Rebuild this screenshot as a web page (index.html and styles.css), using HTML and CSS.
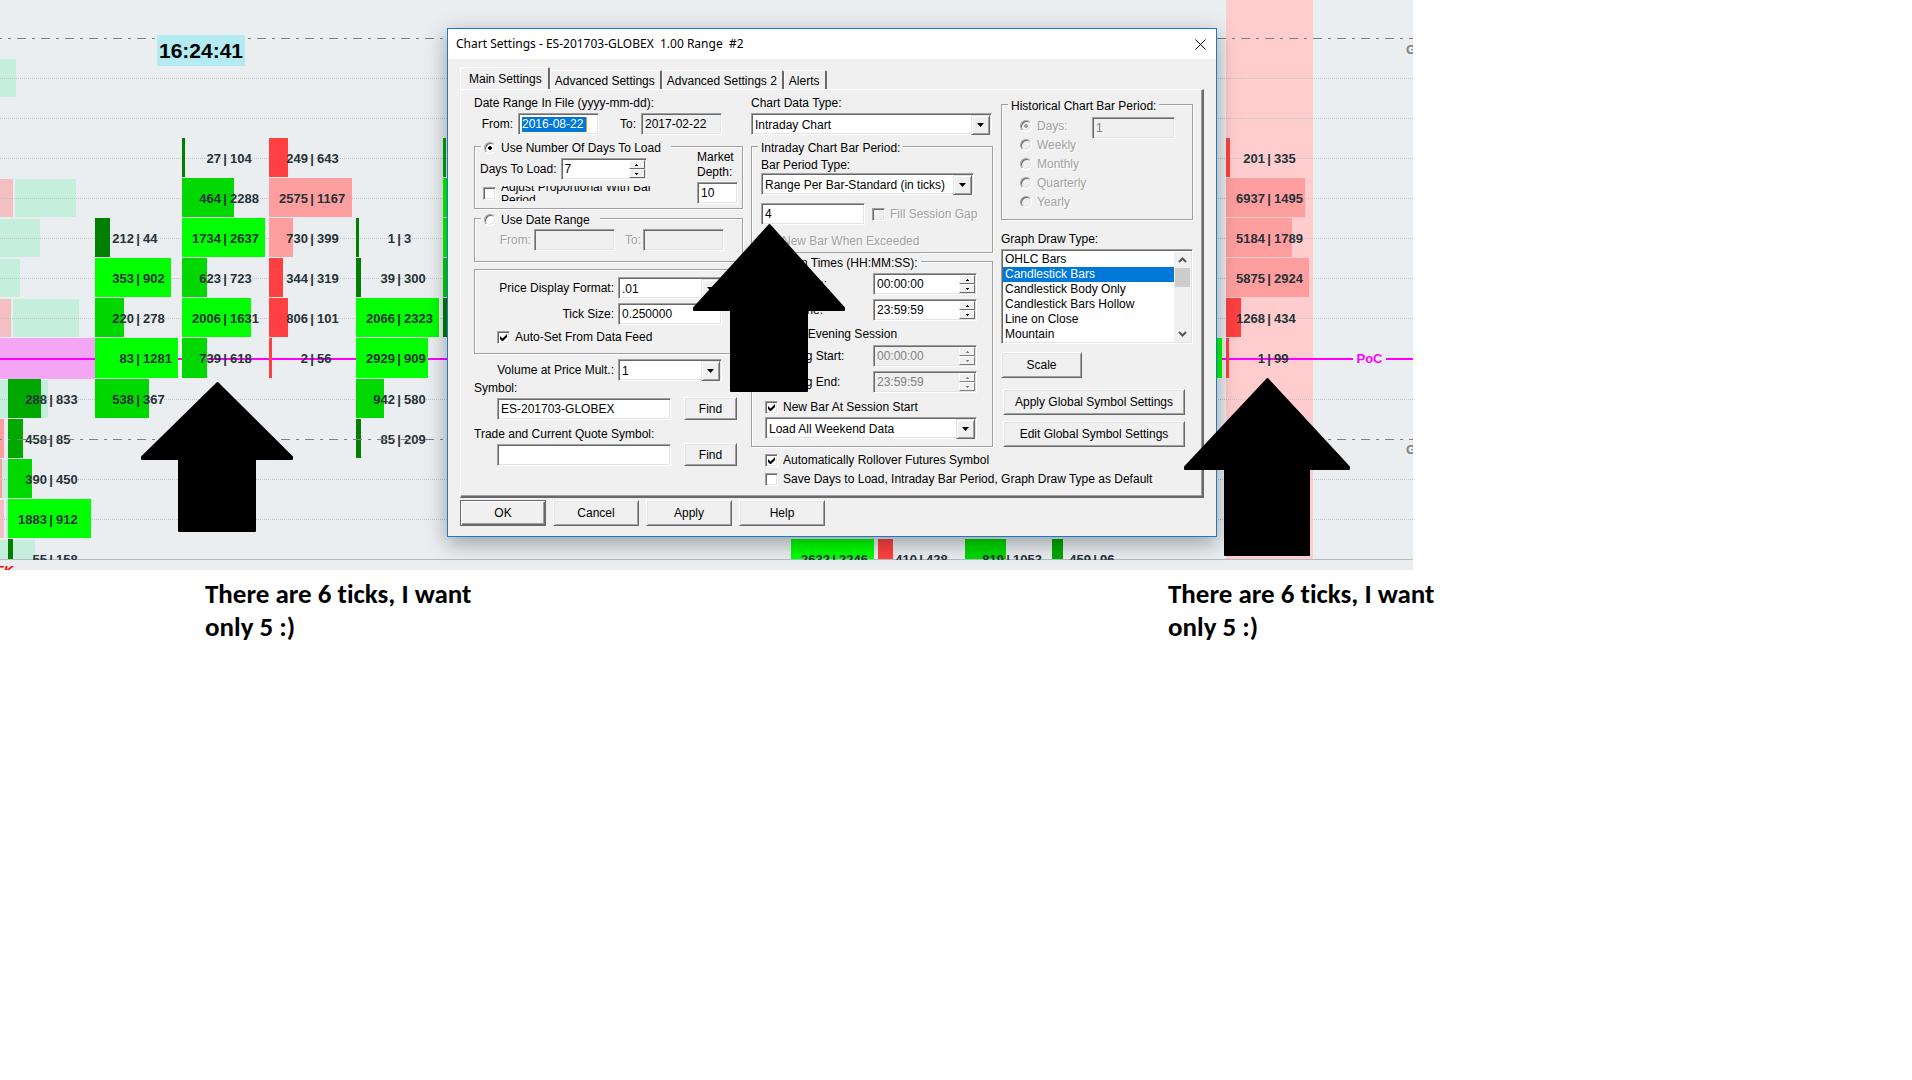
FILE: index.html
```html
<!DOCTYPE html>
<html lang="en">
<head>
  <meta charset="UTF-8">
  <meta name="viewport" content="width=device-width, initial-scale=1.0">
  <title>Chart Settings</title>
  <link rel="stylesheet" href="styles.css">
</head>
<body>
  <main class="chart">
    <!-- grid lines, highlighted column and volume profile -->
    <svg class="backdrop" width="100%" height="570">
      <g class="profile-green">
        <rect x="0" y="59" width="16" height="38" />
        <rect x="15" y="179" width="61" height="38" />
        <rect x="0" y="219" width="40" height="38" />
        <rect x="0" y="259" width="20" height="38" />
        <rect x="13" y="299" width="66" height="38" />
        <rect x="0" y="380" width="48" height="38" />
        <rect x="2" y="460" width="6" height="38" />
        <rect x="6" y="500" width="2" height="38" />
        <rect x="0" y="540" width="35" height="19" />
      </g>
      <g class="profile-pink">
        <rect x="0" y="179" width="13" height="38" />
        <rect x="0" y="299" width="11" height="38" />
        <rect x="0" y="500" width="4" height="38" />
      </g>
      <rect class="profile-red" x="0" y="419" width="4" height="39" />
      <rect class="profile-red" x="0" y="459" width="2" height="39" />
      <rect class="profile-poc" x="0" y="338" width="95" height="41" />
      <rect class="highlight" x="1226" y="0" width="87" height="559" />
      <g class="dotted">
        <line x1="0" y1="78.5" x2="100%" y2="78.5" />
        <line x1="0" y1="118.5" x2="100%" y2="118.5" />
        <line x1="0" y1="158.5" x2="100%" y2="158.5" />
        <line x1="0" y1="198.5" x2="100%" y2="198.5" />
        <line x1="0" y1="238.5" x2="100%" y2="238.5" />
        <line x1="0" y1="278.5" x2="100%" y2="278.5" />
        <line x1="0" y1="318.5" x2="100%" y2="318.5" />
        <line x1="0" y1="399.5" x2="100%" y2="399.5" />
        <line x1="0" y1="479.5" x2="100%" y2="479.5" />
        <line x1="0" y1="519.5" x2="100%" y2="519.5" />
      </g>
      <line class="poc-line" x1="0" y1="359" x2="100%" y2="359" />
      <line class="axis" x1="0" y1="559.5" x2="100%" y2="559.5" />
    </svg>

    <div class="columns" id="columns"></div>

    <svg class="overlay" width="100%" height="570">
      <line x1="0" y1="38.5" x2="100%" y2="38.5" />
      <line x1="0" y1="439.5" x2="100%" y2="439.5" />
    </svg>

    <time class="clock">16:24:41</time>
    <span class="poc-label">PoC</span>
    <span class="level-label high">G</span>
    <span class="level-label low">G</span>
    <span class="week-label">EK</span>
  </main>

  <div class="notes">
    <p>There are 6 ticks, I want only 5 :)</p>
    <p>There are 6 ticks, I want only 5 :)</p>
  </div>

  <form class="dialog" onsubmit="return false">
    <header class="titlebar">
      <h1>Chart Settings - ES-201703-GLOBEX&nbsp; 1.00 Range&nbsp; #2</h1>
      <button type="button" class="close" aria-label="Close">
        <svg width="11" height="11" viewBox="0 0 11 11"><path d="M.5.5l10 10M10.5.5l-10 10" stroke="#000" fill="none" /></svg>
      </button>
    </header>

    <div class="dialog-body">
      <nav class="tabs">
        <button type="button" class="tab active">Main Settings</button>
        <button type="button" class="tab">Advanced Settings</button>
        <button type="button" class="tab">Advanced Settings 2</button>
        <button type="button" class="tab">Alerts</button>
      </nav>

      <div class="panel">
        <section class="col col-left">
          <div class="label">Date Range In File (yyyy-mm-dd):</div>
          <div class="row dates">
            <label for="from">From:</label>
            <span class="field date selected"><input id="from" type="text" value="2016-08-22"></span>
            <label for="to">To:</label>
            <input class="field date readonly" id="to" type="text" value="2017-02-22" readonly>
          </div>

          <fieldset class="group days">
            <legend class="wide"><label><input type="radio" name="mode" checked>Use Number Of Days To Load</label></legend>
            <div class="days-main">
              <div class="row">
                <label for="days">Days To Load:</label>
                <span class="field spin spin-days">
                  <input id="days" type="text" value="7">
                  <span class="steps"><button type="button" aria-label="Up"></button><button type="button" aria-label="Down"></button></span>
                </span>
              </div>
              <label class="adjust"><input type="checkbox"><span>Adjust Proportional With Bar Period</span></label>
            </div>
            <div class="depth">
              <label for="depth">Market Depth:</label>
              <input class="field" id="depth" type="text" value="10">
            </div>
          </fieldset>

          <fieldset class="group range">
            <legend class="wide"><label><input type="radio" name="mode">Use Date Range</label></legend>
            <div class="row dates">
              <label class="off" for="from2">From:</label>
              <input class="field date" id="from2" type="text" disabled>
              <label class="off" for="to2">To:</label>
              <input class="field date" id="to2" type="text" disabled>
            </div>
          </fieldset>

          <fieldset class="group price">
            <div class="row right">
              <label for="format">Price Display Format:</label>
              <span class="field combo"><select id="format"><option>.01</option></select></span>
            </div>
            <div class="row right">
              <label for="tick">Tick Size:</label>
              <input class="field" id="tick" type="text" value="0.250000">
            </div>
            <label class="check"><input type="checkbox" checked>Auto-Set From Data Feed</label>
          </fieldset>

          <div class="row right volume">
            <label for="mult">Volume at Price Mult.:</label>
            <span class="field combo"><select id="mult"><option>1</option></select></span>
          </div>
          <label class="label" for="symbol">Symbol:</label>
          <div class="row symbol">
            <input class="field" id="symbol" type="text" value="ES-201703-GLOBEX">
            <button type="button" class="btn">Find</button>
          </div>
          <label class="label trade" for="quote">Trade and Current Quote Symbol:</label>
          <div class="row symbol">
            <input class="field" id="quote" type="text">
            <button type="button" class="btn">Find</button>
          </div>
        </section>

        <section class="col col-mid">
          <label class="label" for="datatype">Chart Data Type:</label>
          <span class="field combo datatype"><select id="datatype"><option>Intraday Chart</option></select></span>

          <fieldset class="group period">
            <legend>Intraday Chart Bar Period:</legend>
            <label class="label" for="bartype">Bar Period Type:</label>
            <span class="field combo"><select id="bartype"><option>Range Per Bar-Standard (in ticks)</option></select></span>
            <div class="row">
              <input class="field" type="text" value="4" aria-label="Bar period">
              <label class="check off"><input type="checkbox" disabled>Fill Session Gap</label>
            </div>
            <label class="check off exceeded"><input type="checkbox" disabled>New Bar When Exceeded</label>
          </fieldset>

          <fieldset class="group session">
            <legend>Session Times (HH:MM:SS):</legend>
            <div class="row">
              <label for="start">Start Time:</label>
              <span class="field spin">
                <input id="start" type="text" value="00:00:00">
                <span class="steps"><button type="button" aria-label="Up"></button><button type="button" aria-label="Down"></button></span>
              </span>
            </div>
            <div class="row">
              <label for="end">End Time:</label>
              <span class="field spin">
                <input id="end" type="text" value="23:59:59">
                <span class="steps"><button type="button" aria-label="Up"></button><button type="button" aria-label="Down"></button></span>
              </span>
            </div>
            <label class="check evening"><input type="checkbox">Use Evening Session</label>
            <div class="row">
              <label for="estart">Evening Start:</label>
              <span class="field spin disabled">
                <input id="estart" type="text" value="00:00:00" disabled>
                <span class="steps"><button type="button" aria-label="Up" disabled></button><button type="button" aria-label="Down" disabled></button></span>
              </span>
            </div>
            <div class="row">
              <label for="eend">Evening End:</label>
              <span class="field spin disabled">
                <input id="eend" type="text" value="23:59:59" disabled>
                <span class="steps"><button type="button" aria-label="Up" disabled></button><button type="button" aria-label="Down" disabled></button></span>
              </span>
            </div>
            <label class="check newbar"><input type="checkbox" checked>New Bar At Session Start</label>
            <span class="field combo"><select aria-label="Weekend data"><option>Load All Weekend Data</option></select></span>
          </fieldset>

          <div class="defaults">
            <label class="check"><input type="checkbox" checked>Automatically Rollover Futures Symbol</label>
            <label class="check"><input type="checkbox">Save Days to Load, Intraday Bar Period, Graph Draw Type as Default</label>
          </div>
        </section>

        <section class="col col-right">
          <fieldset class="group historical">
            <legend>Historical Chart Bar Period:</legend>
            <div class="radios off">
              <label><input type="radio" name="hist" checked disabled>Days:</label>
              <label><input type="radio" name="hist" disabled>Weekly</label>
              <label><input type="radio" name="hist" disabled>Monthly</label>
              <label><input type="radio" name="hist" disabled>Quarterly</label>
              <label><input type="radio" name="hist" disabled>Yearly</label>
            </div>
            <input class="field" type="text" value="1" aria-label="Days" disabled>
          </fieldset>

          <label class="label draw" for="drawtype">Graph Draw Type:</label>
          <div class="field listbox">
            <select id="drawtype" size="6">
              <option>OHLC Bars</option>
              <option selected>Candlestick Bars</option>
              <option>Candlestick Body Only</option>
              <option>Candlestick Bars Hollow</option>
              <option>Line on Close</option>
              <option>Mountain</option>
            </select>
            <div class="scrollbar">
              <svg width="9" height="6" viewBox="0 0 9 6"><path d="M1 5l3.500-3.500L8 5" /></svg>
              <span class="thumb"></span>
              <svg width="9" height="6" viewBox="0 0 9 6"><path d="M1 1l3.500 3.500L8 1" /></svg>
            </div>
          </div>
          <button type="button" class="btn scale">Scale</button>
          <button type="button" class="btn global">Apply Global Symbol Settings</button>
          <button type="button" class="btn global">Edit Global Symbol Settings</button>
        </section>
      </div>

      <footer class="actions">
        <button type="submit" class="btn default">OK</button>
        <button type="button" class="btn">Cancel</button>
        <button type="button" class="btn">Apply</button>
        <button type="button" class="btn">Help</button>
      </footer>
    </div>
  </form>

  <!-- hand drawn arrows on top of everything -->
  <svg class="arrows" width="1413" height="570">
    <path d="M217.500 383L292 457v2h-37v72h-76v-72h-37v-2z" />
    <path d="M769.500 225L844 308v2h-37v81h-76v-81h-37v-2z" />
    <path d="M1267.500 379L1349 467v2h-40v86h-84v-86h-40v-2z" />
  </svg>

  <script src="chart.js"></script>
</body>
</html>
```
FILE: chart.js
```js
// one entry per price bar: [row, bid, ask, bar width, colour]
const bars = [
  [[7, 288, 833, 33, 'mid'], [8, 458, 85, 15, 'mid'], [9, 390, 450, 24, 'green'], [10, 1883, 912, 83, 'lime'], [11, 55, 158, 5, 'dark']],
  [[3, 212, 44, 15, 'dark'], [4, 353, 902, 76, 'lime'], [5, 220, 278, 29, 'green'], [6, 83, 1281, 83, 'lime'], [7, 538, 367, 54, 'green']],
  [[1, 27, 104, 3, 'dark'], [2, 464, 2288, 52, 'green'], [3, 1734, 2637, 83, 'lime'], [4, 623, 723, 25, 'green'], [5, 2006, 1631, 69, 'lime'], [6, 739, 618, 25, 'green']],
  [[1, 249, 643, 19, 'red'], [2, 2575, 1167, 83, 'pink'], [3, 730, 399, 24, 'pink'], [4, 344, 319, 14, 'red'], [5, 806, 101, 19, 'red'], [6, 2, 56, 3, 'red']],
  [[3, 1, 3, 3, 'dark'], [4, 39, 300, 5, 'dark'], [5, 2066, 2323, 83, 'lime'], [6, 2929, 909, 72, 'lime'], [7, 942, 580, 28, 'green'], [8, 85, 209, 5, 'dark']],
  [[1, '', '', 3, 'mid'], [2, '', '', 40, 'lime'], [3, '', '', 83, 'lime'], [4, '', '', 40, 'green'], [5, '', '', 5, 'dark']],
  [],
  [],
  [],
  [[11, 2632, 2246, 83, 'lime']],
  [[11, 410, 428, 15, 'red']],
  [[11, 819, 1053, 41, 'green']],
  [[11, 459, 96, 11, 'mid']],
  [[6, '', '', 83, 'lime']],
  [[1, 201, 335, 4, 'red'], [2, 6937, 1495, 79, 'pink'], [3, 5184, 1789, 66, 'pink'], [4, 5875, 2924, 83, 'pink'], [5, 1268, 434, 15, 'red'], [6, 1, 99, 3, 'red']]
]

const columns = document.getElementById('columns')

for (const bar of bars) {
  const column = document.createElement('div')
  column.className = 'column'
  for (const [row, bid, ask, width, colour] of bar) {
    const cell = document.createElement('div')
    cell.className = 'cell'
    cell.style.gridRow = row
    cell.innerHTML = `<i class="bar ${colour}" style="width: ${width}px"></i>`
    if (bid !== '') {
      cell.innerHTML += `<span class="bid">${bid}</span><span class="sep">|</span><span class="ask">${ask}</span>`
    }
    column.appendChild(cell)
  }
  columns.appendChild(column)
}
```
FILE: styles.css
```css
* {
  box-sizing: border-box;
}

body {
  margin: 0;
  background: #fff;
  color: #000;
  font: 12px/14px "Liberation Sans", Arial, sans-serif;
}

/* chart */
.chart {
  position: relative;
  width: 73.9%;
  padding: 138px 0 10px 8px;
  overflow: hidden;
  background: #eaeef1;
}

.backdrop,
.overlay {
  position: absolute;
  top: 0;
  left: 0;
}

.profile-green { fill: #c5eedd; }
.profile-pink { fill: #f3bfc3; }
.profile-red { fill: #ff9e9e; }
.profile-poc { fill: #f3a6f3; }
.highlight { fill: #ffcdcd; }

.dotted line {
  stroke: #bcc5ca;
  stroke-dasharray: 1 1;
}

.poc-line {
  stroke: #f0f;
  stroke-width: 2;
}

.axis {
  stroke: #b0bcc2;
}

.overlay line {
  stroke: #808080;
  stroke-dasharray: 9 6 3 6;
  stroke-dashoffset: 7;
}

.columns {
  position: relative;
  display: grid;
  grid-template-columns: repeat(15, 87px);
}

.column {
  display: grid;
  grid-template-rows: repeat(5, 40px) 41px repeat(4, 40px) 21px;
}

.cell {
  position: relative;
  display: grid;
  grid-template-columns: 39px 8px 40px;
  overflow: hidden;
  color: #263238;
  font: bold 13px/42px "Liberation Sans", Arial, sans-serif;
}

.bar {
  position: absolute;
  top: 0;
  bottom: 1px;
  left: 0;
}

.bar.lime { background: #0f0; }
.bar.green { background: #00d800; }
.bar.mid { background: #00a800; }
.bar.dark { background: #008000; }
.bar.red { background: #ff4040; }
.bar.pink { background: #ff9e9e; }

.bid,
.sep,
.ask {
  position: relative;
}

.bid {
  text-align: right;
}

.sep {
  text-align: center;
}

.ask {
  padding-left: 1px;
}

.clock {
  position: absolute;
  top: 35px;
  left: 157px;
  width: 88px;
  background: #b2ebf2;
  text-align: center;
  font: bold 21px/31px "Liberation Sans", Arial, sans-serif;
}

.poc-label,
.level-label,
.week-label {
  position: absolute;
  font: bold 13px/18px "Liberation Sans", Arial, sans-serif;
}

.poc-label {
  top: 350px;
  left: 1353px;
  width: 33px;
  background: #eaeef1;
  color: #f0f;
  text-align: center;
}

.level-label {
  left: 1406px;
  color: #808080;
}

.level-label.high { top: 41px; }
.level-label.low { top: 441px; }

.week-label {
  top: 562px;
  left: -5px;
  color: #f00;
  font-style: italic;
}

/* notes under the chart */
.notes {
  display: flex;
  gap: 683px;
  padding: 7px 0 0 205px;
}

.notes p {
  width: 280px;
  margin: 0;
  font: bold 27px/33px Carlito, Lato, sans-serif;
  font-variant-ligatures: none;
}

.arrows {
  position: absolute;
  top: 0;
  left: 0;
  stroke: #000;
  stroke-width: 2;
  stroke-linejoin: round;
  pointer-events: none;
}

/* dialog window */
.dialog {
  position: absolute;
  top: 28px;
  left: 447px;
  width: 770px;
  border: 1px solid #1979ca;
  background: #f0f0f0;
  box-shadow: 0 6px 20px rgba(0, 0, 0, 0.35);
}

.titlebar {
  display: flex;
  justify-content: space-between;
  align-items: center;
  height: 30px;
  padding: 0 10px 0 8px;
  background: #fff;
}

.titlebar h1 {
  margin: 0;
  font: 12px/16px "Noto Sans", "Open Sans", sans-serif;
}

.close {
  display: flex;
  padding: 0;
  border: 0;
  background: none;
}

.dialog-body {
  padding: 8px 12px 10px;
}

button,
input,
select {
  margin: 0;
  color: #000;
  font: inherit;
}

.tabs {
  display: flex;
  align-items: flex-end;
}

.tab {
  height: 19px;
  padding: 1px 5px 0 4px;
  border: 1px solid #fff;
  border-right: 2px solid #696969;
  border-bottom: 0;
  border-radius: 2px 2px 0 0;
  background: #f0f0f0;
  white-space: nowrap;
}

.tab.active {
  height: 22px;
  padding: 0 6px 0 8px;
}

.panel {
  display: grid;
  grid-template-columns: 269px 242px 193px;
  gap: 8px;
  padding: 0 0 10px 13px;
  border: 1px solid #fff;
  border-right: 2px solid #696969;
  border-bottom: 2px solid #696969;
  box-shadow: inset -1px -1px 0 #a0a0a0;
}

.col {
  padding-top: 6px;
  white-space: nowrap;
}

.label {
  display: block;
}

.row {
  display: flex;
  align-items: center;
}

.group {
  min-width: 0;
  margin: 0;
  padding: 0;
  border: 1px solid #a0a0a0;
  box-shadow: 1px 1px 0 #fff, inset 1px 1px 0 #fff;
}

.group legend {
  margin-left: 6px;
  padding: 3px 3px 0;
  background: #f0f0f0;
}

.field {
  width: 104px;
  height: 22px;
  padding: 0 3px;
  border: 1px solid;
  border-color: #a0a0a0 #fff #fff #a0a0a0;
  border-radius: 0;
  outline: 0;
  background: #fff;
  box-shadow: inset 1px 1px 0 #696969, inset -1px -1px 0 #e3e3e3;
}

.field:disabled,
.field.disabled,
.field.readonly {
  background: #f0f0f0;
  color: #808080;
}

.field.readonly {
  color: #000;
}

.off {
  color: #a0a0a0;
  text-shadow: 1px 1px 0 #fff;
}

input[type="radio"],
input[type="checkbox"] {
  flex: none;
  appearance: none;
  width: 13px;
  height: 13px;
  border: 1px solid;
  border-color: #a0a0a0 #fff #fff #a0a0a0;
  background: #fff center no-repeat;
  box-shadow: inset 1px 1px 0 #696969, inset -1px -1px 0 #e3e3e3;
}

input[type="radio"] {
  width: 12px;
  height: 12px;
  border-radius: 50%;
}

input[type="radio"]:disabled,
input[type="checkbox"]:disabled {
  background-color: #f0f0f0;
}

input[type="checkbox"]:checked {
  background-image: url("data:image/svg+xml,%3Csvg xmlns='http://www.w3.org/2000/svg' width='7' height='7'%3E%3Cpath d='M0 2v3l2 2h1l4-4V0L2.500 4.500z'/%3E%3C/svg%3E");
}

input[type="radio"]:checked {
  background-image: radial-gradient(circle, #000 2px, transparent 2px);
}

input[type="radio"]:checked:disabled {
  background-image: radial-gradient(circle, #a0a0a0 2px, transparent 2px);
}

.check,
.group legend label,
.radios label {
  display: flex;
  align-items: center;
  gap: 5px;
}

.btn {
  height: 26px;
  padding: 0;
  border: 1px solid;
  border-color: #fff #696969 #696969 #fff;
  background: #f0f0f0;
  box-shadow: inset 1px 1px 0 #e3e3e3, inset -1px -1px 0 #a0a0a0;
}

/* drop-downs */
.combo {
  position: relative;
  display: flex;
  padding: 1px;
}

.combo select {
  flex: 1;
  min-width: 0;
  padding: 2px 2px 0;
  border: 0;
  appearance: none;
  outline: 0;
  background: none;
}

.combo::after {
  content: "";
  position: absolute;
  top: 1px;
  right: 1px;
  width: 17px;
  height: 18px;
  border: 1px solid;
  border-color: #e3e3e3 #696969 #696969 #e3e3e3;
  background: #f0f0f0 url("data:image/svg+xml,%3Csvg xmlns='http://www.w3.org/2000/svg' width='7' height='4'%3E%3Cpath d='M0 0h7L3.500 4z'/%3E%3C/svg%3E") center no-repeat;
  box-shadow: inset 1px 1px 0 #fff, inset -1px -1px 0 #a0a0a0;
  pointer-events: none;
}

/* spin boxes */
.spin {
  display: flex;
  padding: 1px 1px 1px 3px;
}

.spin input {
  flex: 1;
  width: 0;
  min-width: 0;
  padding: 0;
  border: 0;
  outline: 0;
  background: none;
}

.spin input:disabled {
  color: #808080;
}

.steps {
  display: flex;
  flex-direction: column;
  width: 16px;
}

.steps button {
  flex: 1;
  padding: 0;
  border: 1px solid;
  border-color: #fff #696969 #696969 #fff;
  background: #f0f0f0 url("data:image/svg+xml,%3Csvg xmlns='http://www.w3.org/2000/svg' width='3' height='2'%3E%3Cpath d='M1 0h1v1h1v1H0V1h1z'/%3E%3C/svg%3E") center no-repeat;
}

.steps button:last-child {
  background-image: url("data:image/svg+xml,%3Csvg xmlns='http://www.w3.org/2000/svg' width='3' height='2'%3E%3Cpath d='M0 0h3v1H2v1H1V1H0z'/%3E%3C/svg%3E");
}

.steps button:disabled {
  border-color: #fff #808080 #808080 #fff;
  background-image: url("data:image/svg+xml,%3Csvg xmlns='http://www.w3.org/2000/svg' width='3' height='2'%3E%3Cpath fill='gray' d='M1 0h1v1h1v1H0V1h1z'/%3E%3C/svg%3E");
}

.steps button:disabled:last-child {
  background-image: url("data:image/svg+xml,%3Csvg xmlns='http://www.w3.org/2000/svg' width='3' height='2'%3E%3Cpath fill='gray' d='M0 0h3v1H2v1H1V1H0z'/%3E%3C/svg%3E");
}

/* left column */
.dates {
  margin-top: 3px;
}

.dates label:first-child {
  width: 44px;
  padding-right: 5px;
  text-align: right;
}

.dates label:nth-of-type(2) {
  width: 42px;
  padding-right: 5px;
  text-align: right;
}

.date {
  width: 81px;
}

.selected {
  display: flex;
  align-items: center;
}

.selected input {
  width: 65px;
  height: 15px;
  padding: 0;
  border: 0;
  border-right: 1px solid #ff8728;
  outline: 0;
  background: #0078d7;
  color: #fff;
}

.group legend.wide {
  padding: 3px 10px 0 3px;
}

.days {
  display: flow-root;
  margin-top: 3px;
}

.days-main {
  float: left;
  padding: 3px 0 7px 5px;
}

.days-main .row {
  gap: 4px;
}

.spin-days {
  width: 86px;
}

.adjust {
  display: flex;
  align-items: center;
  gap: 5px;
  height: 15px;
  margin: 6px 0 0 3px;
  overflow: hidden;
}

.adjust span {
  width: 160px;
  line-height: 13px;
  white-space: normal;
}

.depth {
  float: right;
  width: 45px;
  margin-top: -5px;
  line-height: 15px;
}

.depth label {
  display: block;
  white-space: normal;
}

.depth .field {
  width: 41px;
  margin-top: 2px;
}

.range {
  margin-top: 1px;
  padding-bottom: 10px;
}

.range .dates {
  margin-top: 2px;
}

.range .dates label:first-child {
  width: 59px;
  padding-right: 3px;
}

.range .dates label:nth-of-type(2) {
  width: 28px;
  padding-right: 2px;
}

.price {
  margin-top: 7px;
  padding: 7px 0 9px;
}

.right {
  justify-content: flex-end;
  gap: 4px;
  padding-right: 20px;
}

.right + .right {
  margin-top: 4px;
}

.price .check {
  margin: 5px 0 0 22px;
}

.volume {
  margin-top: 5px;
  padding-right: 21px;
}

.symbol {
  justify-content: flex-end;
  gap: 13px;
  margin-top: 2px;
  padding-right: 6px;
}

.symbol .field {
  width: 174px;
}

.symbol .btn {
  width: 53px;
  height: 23px;
}

.trade {
  margin-top: 7px;
}

/* middle column */
.datatype {
  width: 241px;
  margin-top: 3px;
}

.period {
  margin-top: 3px;
  padding: 3px 9px 4px;
}

.period legend,
.session legend {
  margin-left: -3px;
}

.period .combo {
  width: 213px;
  margin-top: 1px;
}

.period .row {
  gap: 7px;
  margin-top: 8px;
}

.exceeded {
  margin: 9px 0 0 3px;
}

.session {
  padding: 3px 15px 7px 13px;
}

.session .row {
  justify-content: space-between;
  margin-bottom: 4px;
}

.session .row label {
  padding-left: 4px;
}

.evening {
  margin: 6px 0 4px;
}

.newbar {
  margin: 7px 0 3px;
}

.session .combo {
  width: 212px;
}

.defaults {
  display: grid;
  gap: 5px;
  width: 0;
  margin-top: 6px;
  padding-left: 14px;
}

/* right column */
.historical {
  width: 192px;
}

.radios {
  float: left;
  padding: 3px 0 8px 18px;
}

.radios label {
  height: 19px;
}

.historical .field {
  float: right;
  width: 83px;
  margin: 4px 17px 0 0;
}

.draw {
  margin-top: 12px;
}

.listbox {
  display: flex;
  width: 192px;
  height: 95px;
  margin-top: 3px;
  padding: 2px 1px 1px 1px;
}

.listbox select {
  flex: 1;
  padding: 0;
  border: 0;
  outline: 0;
  overflow: hidden;
  background: #fff;
}

.listbox option {
  min-height: 15px;
  padding: 0 2px;
  line-height: 15px;
}

.listbox option:checked {
  background: #0078d7 linear-gradient(#0078d7, #0078d7);
  color: #fff;
}

.scrollbar {
  display: grid;
  grid-template-rows: 16px 1fr 16px;
  place-items: center;
  width: 17px;
  background: #f0f0f0;
}

.scrollbar path {
  fill: none;
  stroke: #555;
  stroke-width: 2;
}

.thumb {
  align-self: start;
  width: 15px;
  height: 19px;
  background: #cdcdcd;
}

.scale {
  display: block;
  width: 81px;
  margin-top: 8px;
}

.global {
  display: block;
  width: 182px;
  margin: 6px 0 0 2px;
}

.scale + .global {
  margin-top: 11px;
}

/* bottom buttons */
.actions {
  display: flex;
  gap: 7px;
  margin-top: 2px;
}

.actions .btn {
  width: 86px;
}

.btn.default {
  border-color: #696969;
  box-shadow: inset 1px 1px 0 #fff, inset -1px -1px 0 #696969, inset -2px -2px 0 #a0a0a0;
}
```
